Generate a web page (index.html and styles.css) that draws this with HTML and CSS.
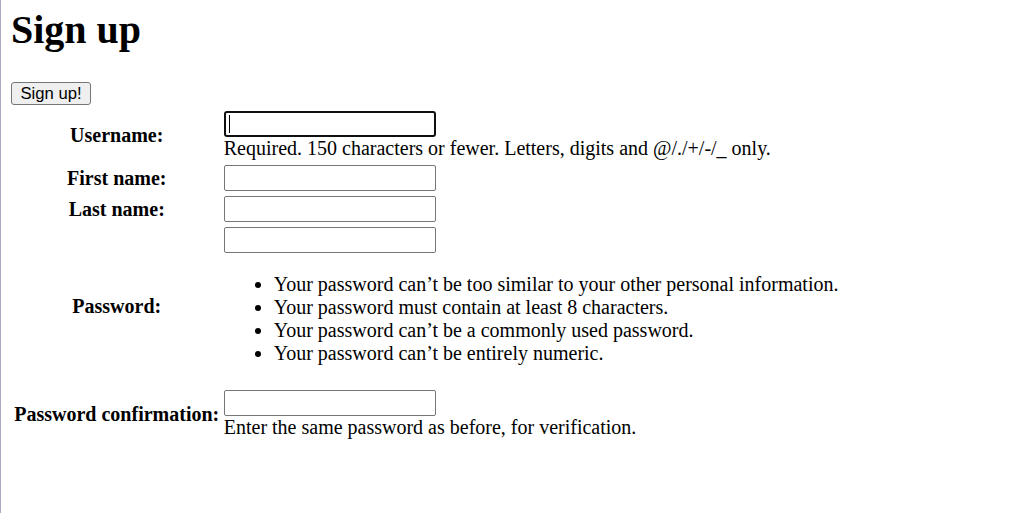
FILE: index.html
```html
<!DOCTYPE html>
<html lang="en">
<head>
<meta charset="utf-8">
<title>Sign up</title>
<link rel="stylesheet" href="styles.css">
</head>
<body>
<h1 class="title">Sign up</h1>
<form class="signup" method="post">
  <button class="submit" type="submit">Sign up!</button>
  <table class="fields">
    <tr>
      <th class="label">Username:</th>
      <td class="field">
        <div class="input-wrap focused"><input class="input input-focus" type="text" name="username"></div>
        <span class="helptext">Required. 150 characters or fewer. Letters, digits and @/./+/-/_ only.</span>
      </td>
    </tr>
    <tr>
      <th class="label">First name:</th>
      <td class="field"><input class="input" type="text" name="first_name"></td>
    </tr>
    <tr>
      <th class="label">Last name:</th>
      <td class="field"><input class="input" type="text" name="last_name"></td>
    </tr>
    <tr>
      <th class="label">Password:</th>
      <td class="field">
        <input class="input" type="password" name="password1">
        <ul class="rules">
          <li>Your password can’t be too similar to your other personal information.</li>
          <li>Your password must contain at least 8 characters.</li>
          <li>Your password can’t be a commonly used password.</li>
          <li>Your password can’t be entirely numeric.</li>
        </ul>
      </td>
    </tr>
    <tr>
      <th class="label">Password confirmation:</th>
      <td class="field">
        <input class="input" type="password" name="password2">
        <span class="helptext">Enter the same password as before, for verification.</span>
      </td>
    </tr>
  </table>
</form>
</body>
</html>
```
FILE: styles.css
```css
html {
  margin: 0;
  background: #ffffff;
  border-left: 1px solid #aaa7c0;
  min-height: 100%;
  box-sizing: border-box;
}

body {
  margin: 0 10px 10px 10px;
  font-family: "Liberation Serif", "Times New Roman", serif;
  font-size: 20px;
  line-height: 23px;
  color: #000;
}

.title {
  font-size: 40px;
  line-height: 46px;
  font-weight: bold;
  margin: 6.5px 0 29.5px 0;
}

.signup {
  margin: 0;
}

.submit {
  display: block;
  box-sizing: border-box;
  height: 23px;
  margin: 0 0 2px 0;
  padding: 0 8.5px;
  font-family: "Liberation Sans", Arial, sans-serif;
  font-size: 16.67px;
  line-height: 19px;
  color: #000;
  background: #efefef;
  border: 1px solid #767676;
  border-radius: 3px;
}

.fields {
  border-collapse: separate;
  border-spacing: 2.5px 3px;
}

.label {
  padding: 1px 1.25px;
  font-weight: bold;
  text-align: center;
  vertical-align: middle;
  white-space: nowrap;
}

.field {
  padding: 1px 1.25px;
  text-align: left;
  vertical-align: middle;
}

.input {
  display: block;
  box-sizing: border-box;
  width: 212px;
  height: 26px;
  margin: 0;
  padding: 1px 3px;
  font-family: "Liberation Sans", Arial, sans-serif;
  font-size: 16.67px;
  background: #fff;
  border: 1px solid #767676;
  border-radius: 2px;
  outline: none;
}

.input-focus {
  border: 2px solid #101010;
  border-radius: 3px;
}

.input-wrap {
  position: relative;
  width: 212px;
}

.focused::after {
  content: "";
  position: absolute;
  left: 5px;
  top: 4px;
  width: 1px;
  height: 18px;
  background: #000;
}

.helptext {
  display: block;
  line-height: 23px;
}

.rules {
  margin: 20px 0;
  padding-left: 50px;
}

.rules li {
  line-height: 23px;
}
```
